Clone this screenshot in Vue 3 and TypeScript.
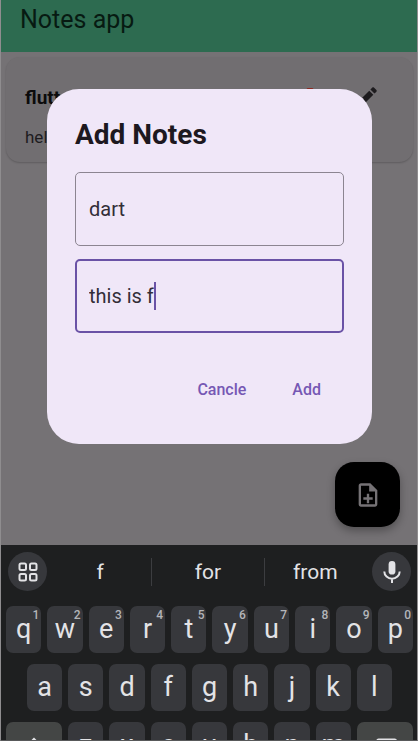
<script setup lang="ts">
import { ref } from 'vue'

interface Key {
  label: string
  hint?: string
}

const title = ref('dart')
const body = ref('this is f')
const open = ref(true)

const suggestions: string[] = ['f', 'for', 'from']
const topRow: Key[] = [...'qwertyuiop'].map((label, i) => ({ label, hint: String((i + 1) % 10) }))
const middleRow: Key[] = [...'asdfghjkl'].map((label) => ({ label }))
const bottomRow: Key[] = [...'zxcvbnm'].map((label) => ({ label }))

function press(label: string): void {
  body.value += label
}
</script>

<template>
  <div class="device">
    <main class="screen">
      <header class="app-bar">
        <h1>Notes app</h1>
      </header>

      <article class="note">
        <div class="note-head">
          <h2>flutter</h2>
          <div class="note-actions">
            <button type="button" aria-label="Delete note">
              <svg class="trash" viewBox="0 0 24 24"><path d="M6 19c0 1.1.9 2 2 2h8c1.1 0 2-.9 2-2V7H6v12zM19 4h-3.5l-1-1h-5l-1 1H5v2h14V4z" /></svg>
            </button>
            <button type="button" aria-label="Edit note">
              <svg class="pencil" viewBox="0 0 24 24"><path d="M3 17.25V21h3.75L17.81 9.94l-3.75-3.75L3 17.25zM20.71 7.04c.39-.39.39-1.02 0-1.41l-2.34-2.34c-.39-.39-1.02-.39-1.41 0l-1.83 1.83 3.75 3.75 1.83-1.83z" /></svg>
            </button>
          </div>
        </div>
        <p>hello</p>
      </article>

      <button class="fab" type="button" aria-label="New note" @click="open = true">
        <svg viewBox="0 0 24 24"><path d="M13 11h-2v3H8v2h3v3h2v-3h3v-2h-3v-3zm1-9H6c-1.100 0-2 .9-2 2v16c0 1.100.89 2 1.990 2H18c1.100 0 2-.9 2-2V8l-6-6zm4 18H6V4h7v5h5v11z" /></svg>
      </button>

      <div v-if="open" class="overlay">
        <form class="dialog" role="dialog" aria-labelledby="dialog-title" @submit.prevent="open = false">
          <h2 id="dialog-title">Add Notes</h2>
          <div class="field">
            <input v-model="title" type="text" aria-label="Title" />
          </div>
          <div class="field active">
            <input v-model="body" type="text" aria-label="Description" />
            <span class="caret-track" aria-hidden="true"><span class="mirror">{{ body }}</span><span class="caret"></span></span>
          </div>
          <div class="actions">
            <button type="button" @click="open = false">Cancle</button>
            <button type="submit">Add</button>
          </div>
        </form>
      </div>
    </main>

    <section class="keyboard" aria-label="Keyboard">
      <div class="toolbar">
        <button class="round" type="button" aria-label="Keyboard menu">
          <svg viewBox="0 0 24 24" class="outline">
            <rect x="3.500" y="3.500" width="6.500" height="6.500" rx="1.500" />
            <rect x="14" y="3.500" width="6.500" height="6.500" rx="1.500" />
            <rect x="3.500" y="14" width="6.500" height="6.500" rx="1.500" />
            <rect x="14" y="14" width="6.500" height="6.500" rx="1.500" />
          </svg>
        </button>
        <div class="suggestions">
          <button v-for="word in suggestions" :key="word" type="button">{{ word }}</button>
        </div>
        <button class="round" type="button" aria-label="Voice input">
          <svg viewBox="0 0 24 24" class="mic">
            <rect x="8.600" y="1" width="6.800" height="13.600" rx="3.400" />
            <path d="M4.300 11.500a7.700 7.200 0 0 0 15.400 0M12 18.500V23" />
          </svg>
        </button>
      </div>

      <div class="row">
        <button v-for="key in topRow" :key="key.label" class="key" type="button" @click="press(key.label)">
          {{ key.label }}<span class="hint">{{ key.hint }}</span>
        </button>
      </div>
      <div class="row inset">
        <button v-for="key in middleRow" :key="key.label" class="key" type="button" @click="press(key.label)">
          {{ key.label }}
        </button>
      </div>
      <div class="row">
        <button class="key wide" type="button" aria-label="Shift">
          <svg viewBox="0 0 24 24" class="outline"><path d="M12 5.500L4 14h4v6h8v-6h4z" /></svg>
        </button>
        <button v-for="key in bottomRow" :key="key.label" class="key" type="button" @click="press(key.label)">
          {{ key.label }}
        </button>
        <button class="key wide" type="button" aria-label="Backspace" @click="body = body.slice(0, -1)">
          <svg viewBox="0 0 24 24" class="outline"><path d="M5 7q0-1 1-1h15q1 0 1 1v12H6l-5-6.500zM11 10l5 5M16 10l-5 5" /></svg>
        </button>
      </div>
    </section>
  </div>
</template>

<style>
body {
  margin: 0;
  background: #757275;
}
</style>

<style scoped>
* {
  box-sizing: border-box;
}

.device {
  display: flex;
  flex-direction: column;
  height: 100vh;
  overflow: hidden;
  border: solid #8f8d8f;
  border-width: 0 1px 1px;
  border-bottom-color: #58595a;
  font-family: Roboto, "Liberation Sans", sans-serif;
}

button {
  margin: 0;
  padding: 0;
  border: 0;
  background: none;
  color: inherit;
  font: inherit;
}

h1,
h2,
p {
  margin: 0;
}

svg {
  display: block;
  width: 26px;
  height: 26px;
  fill: currentColor;
}

.screen {
  position: relative;
  flex: 1;
  min-height: 0;
  background: #757275;
}

.app-bar {
  height: 52px;
  padding: 4px 19px;
  background: #2d6b50;
  color: #071a12;
}

.app-bar h1 {
  font-size: 25px;
  font-weight: 400;
  line-height: 32px;
}

.note {
  margin: 5px 4px 0 5px;
  padding: 23px 19px 13px;
  border-radius: 14px;
  background: #716e71;
  box-shadow: 0 1px 2px rgba(0, 0, 0, 0.2);
  color: #1d1b1e;
}

.note-head {
  display: flex;
  align-items: center;
  justify-content: space-between;
  height: 34px;
}

.note h2 {
  color: #0c0b0c;
  font-size: 19px;
  font-weight: 700;
}

.note-actions {
  display: flex;
  align-items: center;
  gap: 32px;
  padding-right: 14px;
}

.note p {
  padding-top: 11px;
  font-size: 17px;
  line-height: 24px;
}

.trash {
  width: 24px;
  height: 24px;
  color: #8d2a22;
}

.pencil {
  color: #1d1b1e;
}

.fab {
  position: absolute;
  right: 17px;
  bottom: 18px;
  display: grid;
  place-items: center;
  width: 65px;
  height: 65px;
  border-radius: 19px;
  background: #000;
  box-shadow: 0 4px 8px rgba(0, 0, 0, 0.3);
  color: #757275;
}

.fab svg {
  width: 28px;
  height: 28px;
}

.overlay {
  position: absolute;
  inset: 0;
  display: flex;
  align-items: center;
  padding: 0 45px 12px 46px;
  pointer-events: none;
}

.dialog {
  flex: 1;
  min-width: 0;
  padding: 28px 28px 34px;
  border-radius: 32px;
  background: #f0e7f8;
  pointer-events: auto;
}

.dialog h2 {
  margin-bottom: 19px;
  color: #1d1820;
  font-size: 28px;
  font-weight: 700;
  line-height: 36px;
}

.field {
  position: relative;
  display: flex;
  height: 74px;
  margin-bottom: 13px;
  border: 1px solid #8c8591;
  border-radius: 5px;
  font-size: 20px;
}

.field.active {
  border: 2px solid #6a52a6;
}

.field input {
  width: 100%;
  min-width: 0;
  padding: 0 13px;
  border: 0;
  outline: 0;
  background: none;
  color: #332e38;
  font: inherit;
}

.active input {
  padding: 0 12px;
}

.caret-track {
  position: absolute;
  inset: 0;
  display: flex;
  align-items: center;
  padding: 0 12px;
  overflow: hidden;
  pointer-events: none;
  white-space: pre;
}

.mirror {
  visibility: hidden;
}

.caret {
  width: 2px;
  height: 28px;
  background: #6a52a6;
}

.actions {
  display: flex;
  justify-content: flex-end;
  gap: 18px;
  padding-top: 22px;
}

.actions button {
  padding: 0 14px;
  height: 42px;
  color: #7658b4;
  font-size: 16px;
  font-weight: 500;
}

.actions button:last-child {
  margin-right: 9px;
}

.keyboard {
  display: flex;
  flex: 0 0 195px;
  flex-direction: column;
  gap: 11px;
  padding: 7px 4px 0 5px;
  overflow: hidden;
  background: #1e1f20;
  color: #e3e3e6;
}

.toolbar {
  display: flex;
  flex: none;
  align-items: center;
  height: 39px;
  margin: 0 2px 4px;
}

.round {
  display: grid;
  flex: none;
  place-items: center;
  width: 39px;
  height: 39px;
  border-radius: 50%;
  background: #37383c;
}

.outline {
  fill: none;
  stroke: currentColor;
  stroke-width: 2;
}

.mic {
  stroke: currentColor;
  stroke-width: 2;
}

.round svg {
  width: 24px;
  height: 24px;
}

.mic rect {
  stroke: none;
}

.mic path {
  fill: none;
}

.suggestions {
  display: grid;
  flex: 1;
  grid-template-columns: 10fr 11fr 10fr;
  margin: 0 6px 0 2px;
  font-size: 21px;
}

.suggestions button {
  height: 28px;
}

.suggestions button + button {
  border-left: 1px solid #3c3d40;
}

.row {
  display: flex;
  flex: none;
  gap: 6px;
}

.inset {
  padding: 0 21px;
}

.key {
  position: relative;
  display: grid;
  flex: 1;
  place-items: center;
  min-width: 0;
  height: 47px;
  padding-bottom: 2px;
  border-radius: 7px;
  background: #37383c;
  font-size: 27px;
  line-height: 32px;
}

.key.wide {
  flex: 0 0 56px;
  padding: 0;
  background: #444645;
}

.hint {
  position: absolute;
  top: 2px;
  right: 2px;
  color: #b4b5b9;
  font-size: 12px;
  font-weight: 500;
  line-height: 14px;
}
</style>
